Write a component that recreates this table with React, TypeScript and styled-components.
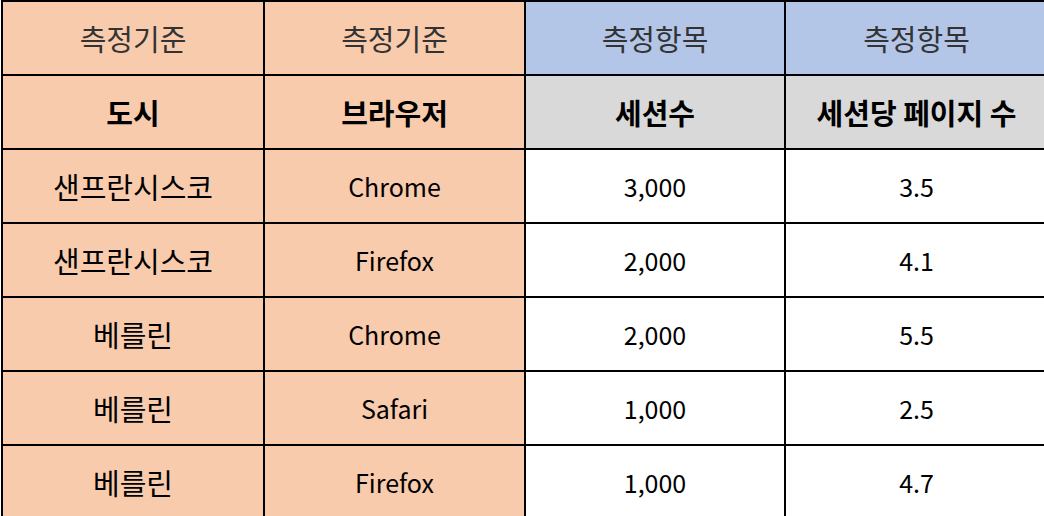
import React from 'react';
import styled, { createGlobalStyle } from 'styled-components';

const GlobalStyle = createGlobalStyle`
  html, body {
    margin: 0;
    padding: 0;
    background: #ffffff;
    overflow: hidden;
  }
  body {
    font-family: "Noto Sans CJK KR", "Noto Sans", sans-serif;
  }
`;

type Tone = 'peach' | 'blue' | 'gray' | 'white';

const toneColors: Record<Tone, string> = {
  peach: '#f8cbad',
  blue: '#b4c6e7',
  gray: '#d9d9d9',
  white: '#ffffff',
};

const Sheet = styled.table`
  margin: 0 0 0 1px;
  border-collapse: collapse;
  table-layout: fixed;
  width: 1046px;
`;

const Row = styled.tr`
  height: 74px;
`;

const Cell = styled.td<{ $tone: Tone; $variant?: 'group' | 'label'; $ko?: boolean }>`
  border: 2px solid #000;
  background: ${(p) => toneColors[p.$tone]};
  text-align: center;
  vertical-align: middle;
  padding: 0;
  font-size: ${(p) => (p.$ko ? '29px' : '25px')};
  line-height: 1;
  color: ${(p) => (p.$variant === 'group' ? '#333333' : '#000000')};
  font-weight: ${(p) => (p.$variant === 'label' ? 700 : 400)};
  white-space: nowrap;
`;

const rows = [
  { city: '샌프란시스코', browser: 'Chrome', sessions: '3,000', pages: '3.5' },
  { city: '샌프란시스코', browser: 'Firefox', sessions: '2,000', pages: '4.1' },
  { city: '베를린', browser: 'Chrome', sessions: '2,000', pages: '5.5' },
  { city: '베를린', browser: 'Safari', sessions: '1,000', pages: '2.5' },
  { city: '베를린', browser: 'Firefox', sessions: '1,000', pages: '4.7' },
];

const App: React.FC = () => {
  return (
    <>
      <GlobalStyle />
      <Sheet>
        <colgroup>
          <col style={{ width: 262 }} />
          <col style={{ width: 261 }} />
          <col style={{ width: 260 }} />
          <col style={{ width: 263 }} />
        </colgroup>
        <tbody>
          <Row>
            <Cell $tone="peach" $variant="group" $ko>측정기준</Cell>
            <Cell $tone="peach" $variant="group" $ko>측정기준</Cell>
            <Cell $tone="blue" $variant="group" $ko>측정항목</Cell>
            <Cell $tone="blue" $variant="group" $ko>측정항목</Cell>
          </Row>
          <Row>
            <Cell $tone="peach" $variant="label" $ko>도시</Cell>
            <Cell $tone="peach" $variant="label" $ko>브라우저</Cell>
            <Cell $tone="gray" $variant="label" $ko>세션수</Cell>
            <Cell $tone="gray" $variant="label" $ko>세션당 페이지 수</Cell>
          </Row>
          {rows.map((r, i) => (
            <Row key={i}>
              <Cell $tone="peach" $ko>{r.city}</Cell>
              <Cell $tone="peach">{r.browser}</Cell>
              <Cell $tone="white">{r.sessions}</Cell>
              <Cell $tone="white">{r.pages}</Cell>
            </Row>
          ))}
        </tbody>
      </Sheet>
    </>
  );
};

export default App;
